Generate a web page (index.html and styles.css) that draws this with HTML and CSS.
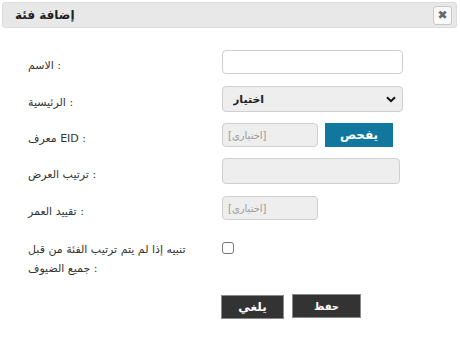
FILE: index.html
```html
<!DOCTYPE html>
<html lang="ar">
<head>
<meta charset="utf-8">
<title>إضافة فئة</title>
<link rel="stylesheet" href="styles.css">
</head>
<body>
<div class="dialog">
  <div class="header">
    <span class="title">إضافة فئة</span>
    <button class="close" type="button">✖</button>
  </div>
  <form class="form">
    <div class="row r1">
      <label class="lbl">الاسم :</label>
      <input class="field wide white" type="text">
    </div>
    <div class="row r2">
      <label class="lbl">الرئيسية :</label>
      <div class="select-wrap">
        <select class="field wide sel"><option>اختيار</option></select>
        <svg class="chev" width="10" height="7" viewBox="0 0 10 7"><path d="M1 1.2 L5 5.2 L9 1.2" fill="none" stroke="#111" stroke-width="2"/></svg>
      </div>
    </div>
    <div class="row r3">
      <label class="lbl">معرف EID :</label>
      <input class="field short" type="text" placeholder="[اختياري]">
      <button class="search" type="button">يفحص</button>
    </div>
    <div class="row r4">
      <label class="lbl">ترتيب العرض :</label>
      <input class="field wide2" type="text">
    </div>
    <div class="row r5">
      <label class="lbl">تقييد العمر :</label>
      <input class="field short" type="text" placeholder="[اختياري]">
    </div>
    <div class="row r6">
      <label class="lbl multi">تنبيه إذا لم يتم ترتيب الفئة من قبل جميع الضيوف :</label>
      <input class="check" type="checkbox">
    </div>
    <div class="actions">
      <button class="btn cancel" type="button">يلغي</button>
      <button class="btn save" type="button">حفظ</button>
    </div>
  </form>
</div>
</body>
</html>
```
FILE: styles.css
```css
html, body {
  margin: 0;
  padding: 0;
  background: #fff;
}
body {
  font-family: "DejaVu Sans", Tahoma, sans-serif;
  font-size: 11px;
  color: #333;
}
.dialog {
  width: 460px;
  height: 337px;
}
.header {
  margin: 2px 3px 0 2px;
  height: 24px;
  background: #e8e8e8;
  border: 1px solid #dcdcdc;
  border-radius: 3px;
  display: flex;
  align-items: center;
  justify-content: space-between;
  padding: 0 4px 0 12px;
}
.title {
  font-weight: bold;
  font-size: 12px;
  color: #222;
}
.close {
  width: 19px;
  height: 19px;
  padding: 0;
  background: #f8f8f8;
  border: 1px solid #c8c8c8;
  border-radius: 3px;
  color: #666;
  font-size: 12px;
  line-height: 17px;
  font-family: "DejaVu Sans", sans-serif;
}
.form {
  display: flex;
  flex-direction: column;
  padding: 22px 0 0 28px;
}
.row {
  display: flex;
  align-items: center;
}
.lbl {
  width: 194px;
  flex: none;
  padding-top: 7px;
  color: #333;
  font-size: 11px;
}
.r2 { margin-top: 12px; }
.r3 { margin-top: 11px; }
.r4 { margin-top: 11px; }
.r5 { margin-top: 12px; }
.r6 { margin-top: 20px; align-items: flex-start; }
.field {
  box-sizing: border-box;
  border: 1px solid #cfcfcf;
  border-radius: 4px;
  background: #eeeeee;
  font-family: "DejaVu Sans", sans-serif;
  font-size: 10px;
  padding: 0 5px;
  margin: 0;
  outline: none;
}
.field::placeholder {
  color: #999;
}
.white { background: #fff; }
.wide { width: 181px; height: 24px; }
.wide2 { width: 178px; height: 26px; }
.short { width: 96px; height: 24px; }
.select-wrap {
  position: relative;
  display: flex;
}
.sel {
  height: 26px;
  appearance: none;
  -webkit-appearance: none;
  font-weight: bold;
  font-size: 11px;
  color: #222;
  padding-left: 10px;
  background: #eeeeee;
}
.chev {
  position: absolute;
  right: 7px;
  top: 10px;
}
.search {
  margin-left: 7px;
  width: 68px;
  height: 24px;
  border: none;
  background: #12779f;
  color: #fff;
  font-weight: bold;
  font-family: "DejaVu Sans", sans-serif;
  font-size: 12px;
  padding: 0;
}
.multi {
  width: 172px;
  margin-right: 22px;
  line-height: 19px;
  padding-top: 0;
}
.check {
  appearance: none;
  -webkit-appearance: none;
  width: 12px;
  height: 12px;
  margin: 2px 0 0 0;
  border: 1px solid #777;
  border-radius: 3px;
  background: #fff;
  box-sizing: border-box;
}
.actions {
  display: flex;
  align-items: flex-start;
  margin-top: 16px;
  padding-left: 193px;
  gap: 8px;
}
.btn {
  box-sizing: border-box;
  height: 24px;
  background: #333;
  color: #fff;
  border: 1px solid #8a8a8a;
  font-weight: bold;
  font-family: "DejaVu Sans", sans-serif;
  font-size: 12px;
  padding: 0;
}
.cancel { width: 63px; margin-top: 1px; }
.save { width: 69px; font-size: 10px; }
```
